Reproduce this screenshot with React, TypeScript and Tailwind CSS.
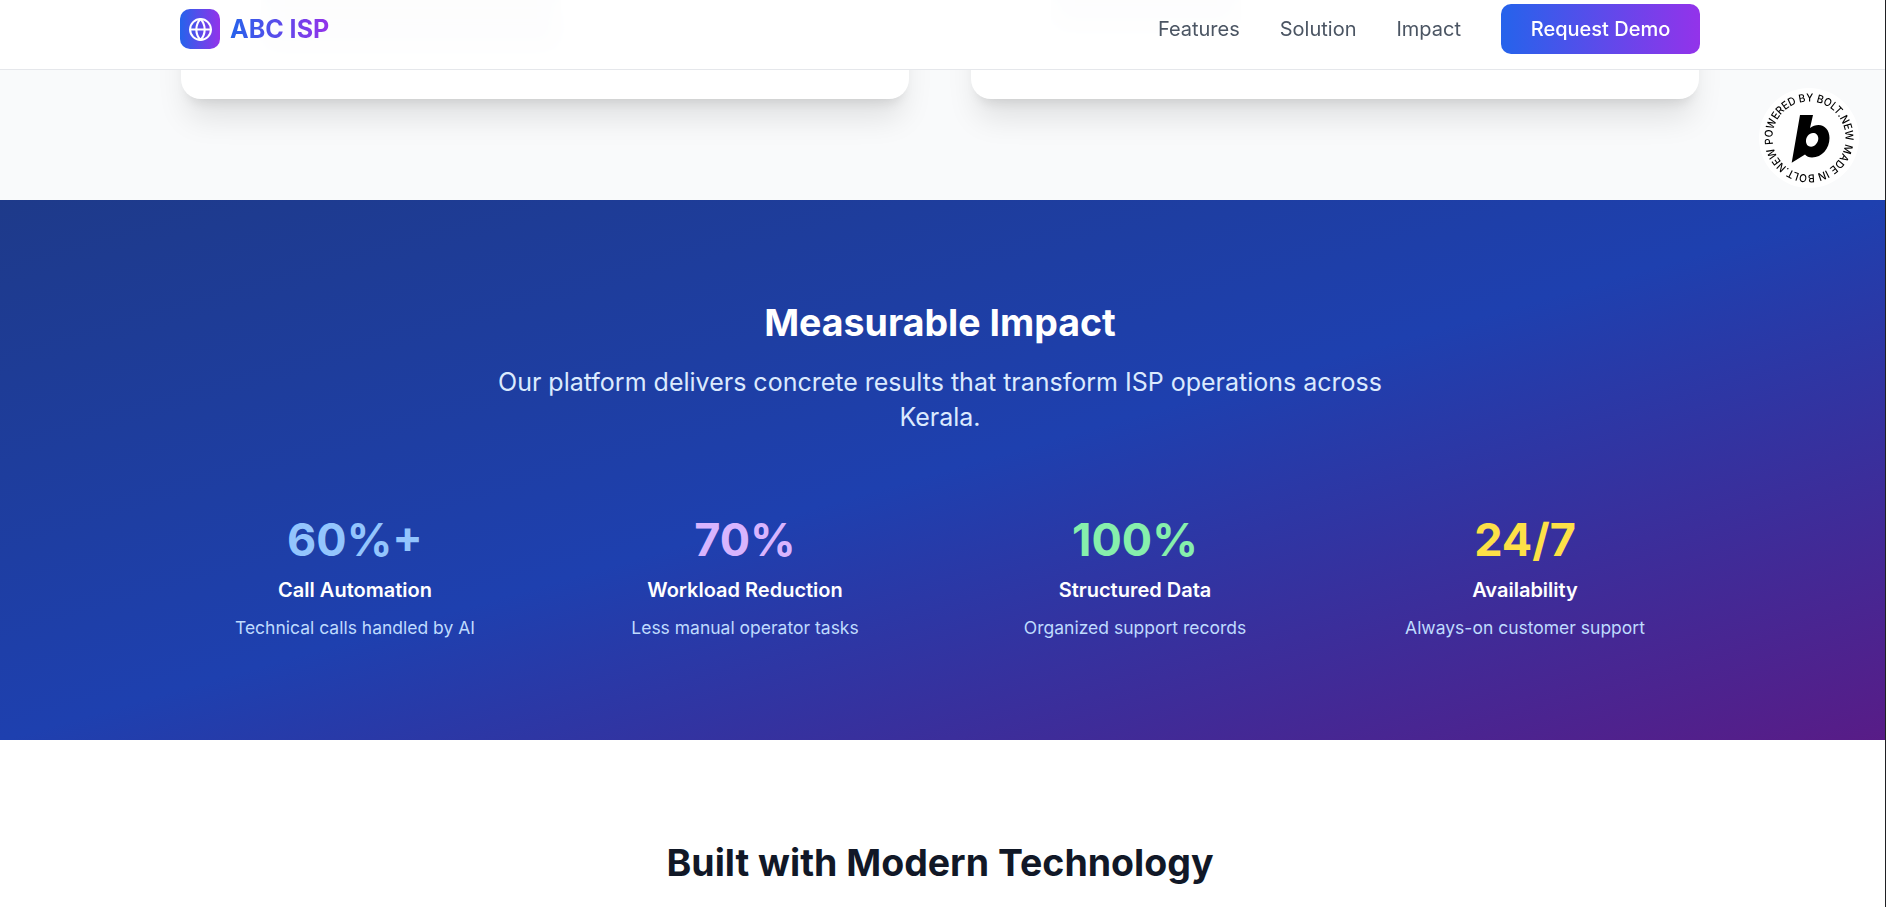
import React from 'react';
import { Globe } from 'lucide-react';

const stats = [
  { value: '60%+', color: 'text-[#93c5fd]', label: 'Call Automation', note: 'Technical calls handled by AI' },
  { value: '70%', color: 'text-[#d8b4fe]', label: 'Workload Reduction', note: 'Less manual operator tasks' },
  { value: '100%', color: 'text-[#86efac]', label: 'Structured Data', note: 'Organized support records' },
  { value: '24/7', color: 'text-[#fde047]', label: 'Availability', note: 'Always-on customer support' },
];

const cardClass =
  'h-[99px] bg-white rounded-b-[20px] shadow-[0_25px_31px_-6px_rgba(0,0,0,0.1),0_10px_12px_-7px_rgba(0,0,0,0.1)] pl-[80px]';

const Header: React.FC = () => (
  <header className="absolute top-0 left-0 right-0 z-40 h-[70px] bg-white/95 backdrop-blur-md border-b border-[#e5e7eb]">
    <div className="w-[1520px] ml-[180px] h-[58px] flex justify-between items-center">
      <div className="flex items-center gap-[10px]">
        <div className="w-10 h-10 rounded-[10px] bg-linear-to-r/srgb from-[#2563eb] to-[#9333ea] flex items-center justify-center">
          <Globe className="w-[25px] h-[25px] text-white" />
        </div>
        <span className="mt-[2px] text-[25px] font-bold bg-linear-to-r/srgb from-[#2563eb] to-[#9333ea] bg-clip-text text-transparent">
          ABC ISP
        </span>
      </div>
      <nav className="flex items-center gap-10">
        {['Features', 'Solution', 'Impact'].map((item) => (
          <a key={item} href={`#${item.toLowerCase()}`} className="text-[20px] text-[#4b5563]">
            {item}
          </a>
        ))}
        <button className="w-[199px] h-[50px] rounded-[10px] text-[20px] font-medium text-white bg-linear-to-r/srgb from-[#2563eb] to-[#9333ea]">
          Request Demo
        </button>
      </nav>
    </div>
  </header>
);

const BoltBadge: React.FC = () => (
  <div className="fixed top-[88px] left-[1759px] z-50 w-[100px] h-[100px]">
    <svg viewBox="0 0 100 100" className="w-full h-full">
      <circle cx="50" cy="50" r="50" fill="#fff" />
      <defs>
        <path id="badge-ring" d="M 14.05 56.35 A 36.5 36.5 0 1 1 85.95 43.65 A 36.5 36.5 0 1 1 14.05 56.35" />
      </defs>
      <text fontSize="11" fill="#000" fontFamily="Inter, sans-serif" fontWeight="500">
        <textPath href="#badge-ring" textLength="226" lengthAdjust="spacingAndGlyphs">
          POWERED BY BOLT.NEW MADE IN BOLT.NEW
        </textPath>
      </text>
      <path
        d="M41 27 L54 27 L51 40 C53.5 38 56.5 37 59.5 37 C66 37 70.5 42.5 70.5 50 C70.5 60.5 63 69.5 53 69.5 C50 69.5 47.5 68.5 46 66.5 L32.7 74.7 Z M54 45 C50 45 47 49 47 53 C47 56.5 49 58.7 52 58.7 C56 58.7 59.3 54.5 59.3 50.5 C59.3 47 57 45 54 45 Z"
        fill="#000"
        fillRule="evenodd"
      />
    </svg>
  </div>
);

export default function App() {
  return (
    <div className="relative h-[907px] overflow-hidden bg-white font-['Inter',sans-serif]">
      <Header />
      <BoltBadge />
      {/* dark hairline down the window's right edge */}
      <div className="absolute top-0 bottom-0 right-0 z-50 w-px bg-[#202124]" />

      <section className="h-[200px] bg-[#f9fafb]">
        <div className="w-[1518px] ml-[181px] grid grid-cols-2 gap-[62px]">
          {/* card text sits under the translucent header, only a smudge shows */}
          <div className={cardClass}>
            <div className="w-[300px] h-[50px] bg-[#d1d5db]" />
          </div>
          <div className={cardClass}>
            <div className="w-[190px] h-[30px] bg-[#d1d5db]" />
          </div>
        </div>
      </section>

      <section className="h-[540px] pt-[100px] bg-linear-to-br/srgb from-[#1e3a8a] via-[#1e40af] to-[#581c87] text-white">
        <div className="w-[1520px] ml-[180px]">
          <div className="text-center mb-20">
            <h2 className="text-[37.5px] leading-[45px] font-bold mb-5">Measurable Impact</h2>
            <p className="w-[960px] mx-auto text-[25px] leading-[35px] text-[#dbeafe]">
              Our platform delivers concrete results that transform ISP operations across Kerala.
            </p>
          </div>
          <div className="grid grid-cols-4 gap-10">
            {stats.map((stat) => (
              <div key={stat.label} className="text-center">
                <div className={`text-[45px] leading-[50px] font-bold mb-[10px] ${stat.color}`}>{stat.value}</div>
                <div className="text-[20px] leading-[30px] font-semibold mb-[10px]">{stat.label}</div>
                <div className="text-[17.5px] leading-[25px] text-[#bfdbfe]">{stat.note}</div>
              </div>
            ))}
          </div>
        </div>
      </section>

      <section className="pt-[100px] bg-white pr-[6px] text-center">
        <h2 className="text-[37.5px] leading-[45px] font-bold text-[#111827]">Built with Modern Technology</h2>
      </section>
    </div>
  );
}
